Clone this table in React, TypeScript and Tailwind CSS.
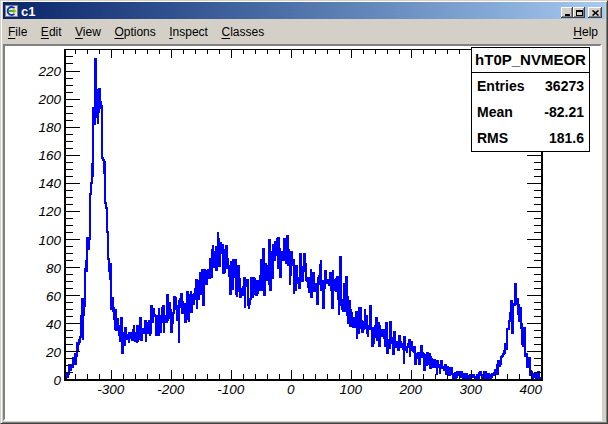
import React from 'react';

// pixel mapping of the frame (page coordinates)
const X0 = 290.7; // x = 0
const SX = 0.6; // px per x unit
const Y0 = 379.5; // y = 0
const SY = 1.4045; // px per count
const FL = 64;
const FR = 543;
const FT = 49;
const FB = 381;

const px = (u: number) => X0 + u * SX;
const py = (v: number) => Y0 - v * SY;

// rough shape of the distribution
const shape: [number, number][] = [
  [-376, 2], [-368, 6], [-359, 15], [-354, 25], [-348, 44], [-344, 58], [-340, 82],
  [-337, 100], [-333, 133], [-330, 158], [-328, 185], [-325, 210], [-322, 205],
  [-319, 198], [-316, 186], [-313, 163], [-310, 146], [-308, 118], [-305, 94],
  [-302, 78], [-299, 63], [-296, 50], [-292, 38], [-286, 32], [-260, 31],
  [-240, 36], [-210, 43], [-185, 47], [-168, 50], [-155, 62], [-143, 72],
  [-125, 88], [-115, 92], [-105, 80], [-95, 73], [-85, 64], [-65, 62], [-50, 70],
  [-35, 82], [-20, 90], [-8, 92], [5, 78], [25, 72], [50, 68], [70, 62], [85, 58],
  [100, 50], [115, 42], [150, 31], [180, 25], [210, 18], [240, 11], [260, 6],
  [280, 3], [300, 1.5], [330, 2], [345, 7], [355, 18], [362, 30], [370, 50],
  [375, 60], [380, 52], [385, 38], [390, 24], [395, 12], [400, 5], [407, 2], [419, 1],
];

function envelope(u: number) {
  if (u <= shape[0][0]) return shape[0][1];
  for (let i = 1; i < shape.length; i++) {
    const [x1, y1] = shape[i];
    if (u <= x1) {
      const [x0, y0] = shape[i - 1];
      return y0 + ((y1 - y0) * (u - x0)) / (x1 - x0);
    }
  }
  return shape[shape.length - 1][1];
}

function mulberry32(a: number) {
  return () => {
    a |= 0;
    a = (a + 0x6d2b79f5) | 0;
    let t = Math.imul(a ^ (a >>> 15), 1 | a);
    t = (t + Math.imul(t ^ (t >>> 7), 61 | t)) ^ t;
    return ((t ^ (t >>> 14)) >>> 0) / 4294967296;
  };
}

// one bin per unit, drawn like ROOT does on a pixel grid
function histPath() {
  const rand = mulberry32(36273);
  const gauss = () => {
    const a = rand() || 1e-9;
    const b = rand();
    return Math.sqrt(-2 * Math.log(a)) * Math.cos(2 * Math.PI * b);
  };
  const bw = 1;
  const start = -376;
  let d = `M${Math.round(px(start))},${Math.round(Y0)}`;
  for (let u = start; u < 418.8; u += bw) {
    const mu = envelope(u + bw / 2);
    const h = Math.max(0, Math.round(mu + Math.sqrt(mu) * gauss()));
    const y = Math.max(FT, py(h));
    d += ` V${Math.round(y)} H${Math.round(px(Math.min(u + bw, 418.5)))}`;
  }
  d += ` V${Math.round(Y0)}`;
  return d;
}

const HIST = histPath();

const yMajor = Array.from({ length: 12 }, (_, i) => i * 20);
const yMinor = Array.from({ length: 47 }, (_, i) => i * 5).filter((v) => v % 20 !== 0);
const xMajor = [-300, -200, -100, 0, 100, 200, 300, 400];
const xMinor = Array.from({ length: 39 }, (_, i) => -360 + i * 20).filter((u) => u % 100 !== 0);

function Chart() {
  const label = { fontFamily: '"Liberation Sans", Arial, sans-serif', fontStyle: 'italic', fontSize: 13.5 };
  return (
    <svg width={593} height={371} viewBox="5 46 593 371" className="block">
      <path d={HIST} fill="none" stroke="#0000ff" strokeWidth={2.6} shapeRendering="crispEdges" />

      {/* frame */}
      <g fill="#000" shapeRendering="crispEdges">
        <rect x={FL} y={FT} width={FR - FL} height={1} />
        <rect x={FL} y={FT} width={2} height={FB - FT} />
        <rect x={FL} y={FB - 2} width={FR - FL} height={2} />
        <rect x={FR - 2} y={FT} width={2} height={FB - FT} />

        {yMajor.map((v) => (
          <g key={`ym${v}`}>
            <rect x={66} y={Math.round(py(v))} width={14} height={1} />
            <rect x={FR - 16} y={Math.round(py(v))} width={14} height={1} />
          </g>
        ))}
        {yMinor.map((v) => (
          <g key={`yn${v}`}>
            <rect x={66} y={Math.round(py(v))} width={7} height={1} />
            <rect x={FR - 9} y={Math.round(py(v))} width={7} height={1} />
          </g>
        ))}
        {xMajor.map((u) => (
          <g key={`xm${u}`}>
            <rect x={Math.round(px(u))} y={FB - 11} width={1} height={9} />
            <rect x={Math.round(px(u))} y={FT + 1} width={1} height={8} />
          </g>
        ))}
        {xMinor.map((u) => (
          <g key={`xn${u}`}>
            <rect x={Math.round(px(u))} y={FB - 7} width={1} height={5} />
            <rect x={Math.round(px(u))} y={FT + 1} width={1} height={4} />
          </g>
        ))}
      </g>

      <g fill="#000" style={label}>
        {yMajor.map((v) => (
          <text key={`yl${v}`} x={61} y={py(v) + 5.5} textAnchor="end">
            {v}
          </text>
        ))}
        {xMajor.map((u) => (
          <text key={`xl${u}`} x={px(u)} y={393.5} textAnchor="middle">
            {u}
          </text>
        ))}
      </g>
    </svg>
  );
}

function StatsBox() {
  const rows = [
    ['Entries', '36273'],
    ['Mean', '-82.21'],
    ['RMS', '181.6'],
  ];
  return (
    <div className="absolute left-[466px] top-[1px] w-[119px] border border-black bg-white font-['Liberation_Sans',Arial,sans-serif] font-bold text-black">
      <div className="h-[25px] flex items-center justify-center border-b border-black text-[15px]">hT0P_NVMEOR</div>
      {rows.map(([k, v]) => (
        <div key={k} className="h-[26px] flex items-center justify-between pl-[5px] pr-[5px] text-[14px]">
          <span>{k}</span>
          <span>{v}</span>
        </div>
      ))}
    </div>
  );
}

function TitleButton({ children, className = '' }: { children: React.ReactNode; className?: string }) {
  return (
    <div
      className={`h-[11px] bg-[#d4d0c8] flex items-center justify-center shadow-[inset_-1px_-1px_0_#404040,inset_1px_1px_0_#ffffff,inset_-2px_-2px_0_#808080] ${className}`}
    >
      {children}
    </div>
  );
}

function AppIcon() {
  return (
    <svg width="13" height="12" viewBox="0 0 13 12">
      <rect x="0.5" y="0.5" width="12" height="11" fill="#e8e8e8" stroke="#808080" />
      <path d="M9.5 3.2A4 4 0 1 0 9.5 8.8" fill="none" stroke="#1030c0" strokeWidth="1.8" />
      <path d="M3 6h7" stroke="#20a020" strokeWidth="1.6" />
      <path d="M8 3.5l2.5 2.5-2.5 2.5" fill="none" stroke="#c8c000" strokeWidth="1.4" />
    </svg>
  );
}

function MenuItem({ first, rest }: { first: string; rest: string }) {
  return (
    <span>
      <span className="underline underline-offset-[2px]">{first}</span>
      {rest}
    </span>
  );
}

export default function App() {
  return (
    <div className="w-[608px] h-[424px] bg-[#d4d0c8] border border-t-[#d4d0c8] border-l-[#d4d0c8] border-r-[#404040] border-b-[#404040] shadow-[inset_1px_1px_0_#ffffff,inset_-1px_-1px_0_#808080] pt-[1px] pl-[2px] pr-[2px] pb-[2px] flex flex-col overflow-hidden">
      {/* title bar */}
      <div className="h-[17px] shrink-0 flex bg-linear-to-r from-[#0a246a] to-[#a6caf0] pl-[2px] pr-[3px]">
        <div className="flex items-center gap-[3px] mt-[1px]">
          <AppIcon />
          <span className="text-white font-bold text-[13px] leading-none font-['Liberation_Sans',Arial,sans-serif]">c1</span>
        </div>
        <div className="ml-auto flex items-end pb-[1px]">
          <TitleButton className="w-[12px]">
            <div className="w-[5px] h-[2px] bg-black mt-[5px]" />
          </TitleButton>
          <TitleButton className="w-[12px]">
            <div className="w-[7px] h-[6px] border border-t-2 border-black" />
          </TitleButton>
          <TitleButton className="w-[14px] ml-[3px]">
            <svg width="7" height="6" viewBox="0 0 7 6">
              <path d="M0.5 0.5L6.5 5.5M6.5 0.5L0.5 5.5" stroke="#000" strokeWidth="1.6" />
            </svg>
          </TitleButton>
        </div>
      </div>

      {/* menu bar */}
      <div className="h-[24px] shrink-0 flex items-center pl-[5px] pr-[7px] pt-[2px] text-[12px] text-black font-['Liberation_Sans',Arial,sans-serif]">
        <div className="flex gap-[13.5px]">
          <MenuItem first="F" rest="ile" />
          <MenuItem first="E" rest="dit" />
          <MenuItem first="V" rest="iew" />
          <MenuItem first="O" rest="ptions" />
          <MenuItem first="I" rest="nspect" />
          <MenuItem first="C" rest="lasses" />
        </div>
        <div className="ml-auto">
          <MenuItem first="H" rest="elp" />
        </div>
      </div>

      {/* canvas */}
      <div className="flex-1 mt-[1px] mr-[3px] border-2 border-t-[#808080] border-l-[#808080] border-b-white border-r-white">
        <div className="relative w-full h-full bg-white">
          <Chart />
          <StatsBox />
        </div>
      </div>
    </div>
  );
}
